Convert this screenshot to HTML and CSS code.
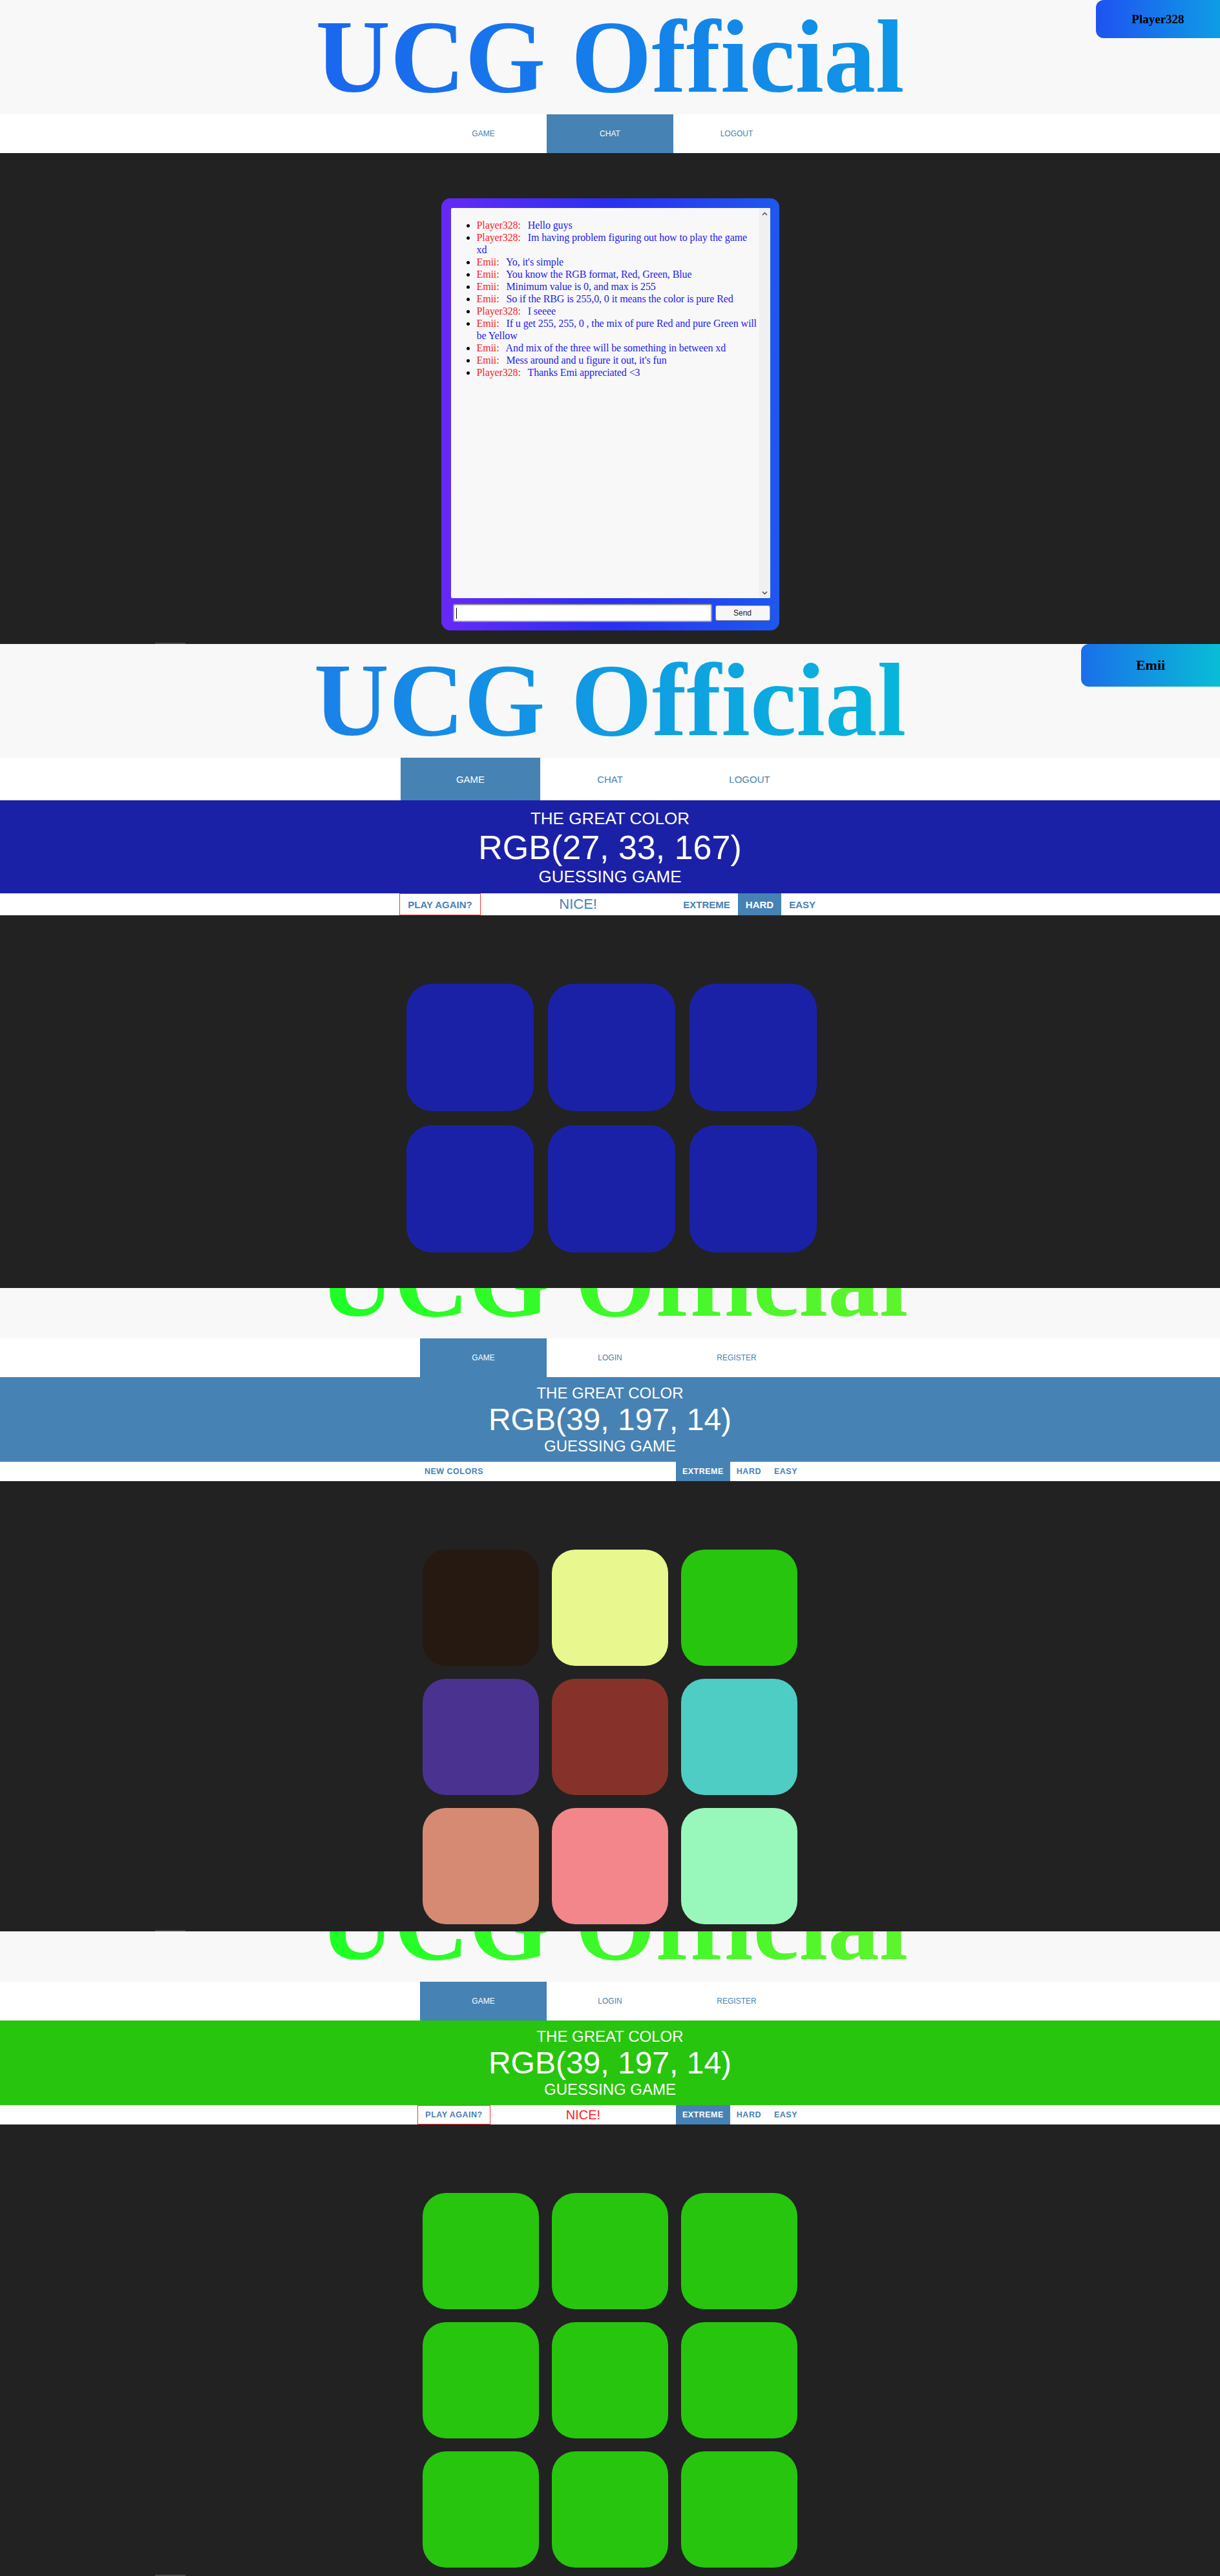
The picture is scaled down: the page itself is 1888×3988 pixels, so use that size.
FILE: index.html
```html
<!DOCTYPE html>
<html lang="en">
<head>
<meta charset="utf-8">
<title>UCG Official</title>
<link rel="stylesheet" href="styles.css">
</head>
<body>

<!-- Screen 1: chat -->
<section class="screen screen-chat">
  <header class="site-header hdr-a">
    <h1 class="title title-blue">UCG Official</h1>
    <div class="badge badge-a">Player328</div>
  </header>
  <nav class="nav">
    <a class="tab">GAME</a>
    <a class="tab active">CHAT</a>
    <a class="tab">LOGOUT</a>
  </nav>
  <main class="chat-area">
    <div class="chat-box">
      <div class="chat-log">
        <ul class="messages">
          <li><span class="name">Player328:</span> <span class="msg">Hello guys</span></li>
          <li><span class="name">Player328:</span> <span class="msg">Im having problem figuring out how to play the game xd</span></li>
          <li><span class="name">Emii:</span> <span class="msg">Yo, it's simple</span></li>
          <li><span class="name">Emii:</span> <span class="msg">You know the RGB format, Red, Green, Blue</span></li>
          <li><span class="name">Emii:</span> <span class="msg">Minimum value is 0, and max is 255</span></li>
          <li><span class="name">Emii:</span> <span class="msg">So if the RBG is 255,0, 0 it means the color is pure Red</span></li>
          <li><span class="name">Player328:</span> <span class="msg">I seeee</span></li>
          <li><span class="name">Emii:</span> <span class="msg">If u get 255, 255, 0 , the mix of pure Red and pure Green will be Yellow</span></li>
          <li><span class="name">Emii:</span> <span class="msg">And mix of the three will be something in between xd</span></li>
          <li><span class="name">Emii:</span> <span class="msg">Mess around and u figure it out, it's fun</span></li>
          <li><span class="name">Player328:</span> <span class="msg">Thanks Emi appreciated &lt;3</span></li>
        </ul>
        <div class="scrollbar">
          <svg class="arrow" width="9" height="6" viewBox="0 0 9 6"><polyline points="1,5 4.5,1.5 8,5" fill="none" stroke="#555" stroke-width="1.6"/></svg>
          <svg class="arrow" width="9" height="6" viewBox="0 0 9 6"><polyline points="1,1 4.5,4.5 8,1" fill="none" stroke="#555" stroke-width="1.6"/></svg>
        </div>
      </div>
      <div class="chat-form">
        <div class="input-box"><span class="caret"></span></div>
        <div class="send-btn">Send</div>
      </div>
    </div>
    <span class="mark"></span>
  </main>
</section>

<!-- Screen 2: game, hard, solved -->
<section class="screen">
  <header class="site-header hdr-b">
    <h1 class="title title-cyan">UCG Official</h1>
    <div class="badge badge-b">Emii</div>
  </header>
  <nav class="nav nav-b">
    <a class="tab active">GAME</a>
    <a class="tab">CHAT</a>
    <a class="tab">LOGOUT</a>
  </nav>
  <div class="game-head head-b" style="background: rgb(27, 33, 167);">
    <div class="line-sm">The Great Color</div>
    <div class="line-lg">RGB(27, 33, 167)</div>
    <div class="line-sm">Guessing Game</div>
  </div>
  <div class="stripe stripe-b">
    <div class="stripe-inner">
      <div class="btn reset outlined">Play Again?</div>
      <div class="message">NICE!</div>
      <div class="btn mode">Extreme</div>
      <div class="btn mode selected">Hard</div>
      <div class="btn mode">Easy</div>
    </div>
  </div>
  <div class="board board-b">
    <div class="grid grid-b">
      <div class="square" style="background: rgb(27, 33, 167);"></div>
      <div class="square" style="background: rgb(27, 33, 167);"></div>
      <div class="square" style="background: rgb(27, 33, 167);"></div>
      <div class="square" style="background: rgb(27, 33, 167);"></div>
      <div class="square" style="background: rgb(27, 33, 167);"></div>
      <div class="square" style="background: rgb(27, 33, 167);"></div>
    </div>
  </div>
</section>

<!-- Screen 3: game, extreme, new -->
<section class="screen">
  <header class="site-header hdr-c">
    <h1 class="title title-green">UCG Official</h1>
  </header>
  <nav class="nav">
    <a class="tab active">GAME</a>
    <a class="tab">LOGIN</a>
    <a class="tab">REGISTER</a>
  </nav>
  <div class="game-head head-c" style="background: #4682b4;">
    <div class="line-sm">The Great Color</div>
    <div class="line-lg">RGB(39, 197, 14)</div>
    <div class="line-sm">Guessing Game</div>
  </div>
  <div class="stripe stripe-c">
    <div class="stripe-inner">
      <div class="btn reset">New Colors</div>
      <div class="message"></div>
      <div class="btn mode selected">Extreme</div>
      <div class="btn mode">Hard</div>
      <div class="btn mode">Easy</div>
    </div>
  </div>
  <div class="board board-c">
    <div class="grid grid-c">
      <div class="square" style="background: rgb(38, 25, 17);"></div>
      <div class="square" style="background: rgb(232, 248, 142);"></div>
      <div class="square" style="background: rgb(39, 197, 14);"></div>
      <div class="square" style="background: rgb(74, 50, 144);"></div>
      <div class="square" style="background: rgb(134, 50, 42);"></div>
      <div class="square" style="background: rgb(78, 205, 196);"></div>
      <div class="square" style="background: rgb(214, 138, 116);"></div>
      <div class="square" style="background: rgb(242, 134, 139);"></div>
      <div class="square" style="background: rgb(152, 248, 188);"></div>
    </div>
    <span class="mark"></span>
  </div>
</section>

<!-- Screen 4: game, extreme, solved -->
<section class="screen">
  <header class="site-header hdr-c">
    <h1 class="title title-green">UCG Official</h1>
  </header>
  <nav class="nav">
    <a class="tab active">GAME</a>
    <a class="tab">LOGIN</a>
    <a class="tab">REGISTER</a>
  </nav>
  <div class="game-head head-c" style="background: rgb(39, 197, 14);">
    <div class="line-sm">The Great Color</div>
    <div class="line-lg">RGB(39, 197, 14)</div>
    <div class="line-sm">Guessing Game</div>
  </div>
  <div class="stripe stripe-c">
    <div class="stripe-inner">
      <div class="btn reset outlined">Play Again?</div>
      <div class="message message-red">NICE!</div>
      <div class="btn mode selected">Extreme</div>
      <div class="btn mode">Hard</div>
      <div class="btn mode">Easy</div>
    </div>
  </div>
  <div class="board board-d">
    <div class="grid grid-c">
      <div class="square" style="background: rgb(39, 197, 14);"></div>
      <div class="square" style="background: rgb(39, 197, 14);"></div>
      <div class="square" style="background: rgb(39, 197, 14);"></div>
      <div class="square" style="background: rgb(39, 197, 14);"></div>
      <div class="square" style="background: rgb(39, 197, 14);"></div>
      <div class="square" style="background: rgb(39, 197, 14);"></div>
      <div class="square" style="background: rgb(39, 197, 14);"></div>
      <div class="square" style="background: rgb(39, 197, 14);"></div>
      <div class="square" style="background: rgb(39, 197, 14);"></div>
    </div>
    <span class="mark"></span>
  </div>
</section>

</body>
</html>
```

FILE: styles.css
```css
* { box-sizing: border-box; }

body {
  margin: 0;
  background: #222222;
  font-family: "Liberation Sans", Arial, sans-serif;
}

.screen { position: relative; }

/* ---------- site header ---------- */
.site-header {
  position: relative;
  background: #f8f8f8;
  overflow: hidden;
  display: flex;
  justify-content: center;
  align-items: flex-start;
}
.hdr-a { height: 177px; }
.hdr-b { height: 176px; }
.hdr-c { height: 78px; padding-left: 12px; }

.title {
  margin: 8px 0 0;
  font-family: "Liberation Serif", "Times New Roman", serif;
  font-weight: bold;
  font-size: 160px;
  line-height: 160px;
  white-space: nowrap;
  color: transparent;
  -webkit-background-clip: text;
  background-clip: text;
}
.hdr-b .title { margin-top: 7px; font-size: 161px; }
.hdr-c .title { margin-top: -91px; }

.title-blue { background-image: linear-gradient(90deg, #1b66ef, #0f97e6); }
.title-cyan { background-image: linear-gradient(90deg, #1a80e9, #07b6dc); }
.title-green { background-image: linear-gradient(90deg, #1cff25, #5ef42c); }

.badge {
  position: absolute;
  top: 0;
  right: 0;
  display: flex;
  align-items: center;
  justify-content: center;
  border-radius: 12px 0 0 12px;
  font-family: "Liberation Serif", "Times New Roman", serif;
  font-weight: bold;
  color: #000;
}
.badge-a {
  width: 192px;
  height: 59px;
  font-size: 19px;
  background: linear-gradient(90deg, #1f52f1, #0e9de5);
}
.badge-b {
  width: 215px;
  height: 66px;
  font-size: 22px;
  background: linear-gradient(90deg, #1a6fea, #09bdd6);
}

/* ---------- nav ---------- */
.nav {
  display: flex;
  justify-content: center;
  height: 60px;
  background: #ffffff;
}
.tab {
  width: 196px;
  display: flex;
  align-items: center;
  justify-content: center;
  color: #4682b4;
  font-size: 12px;
}
.tab.active {
  background: #4682b4;
  color: #ffffff;
}
.nav-b { height: 66px; }
.nav-b .tab { width: 216px; font-size: 15px; }

/* ---------- chat ---------- */
.chat-area {
  position: relative;
  display: block;
  height: 760px;
  padding-top: 70px;
}
.chat-box {
  width: 523px;
  height: 669px;
  margin: 0 auto;
  padding: 15px 14px 13px 15px;
  border-radius: 14px;
  background: linear-gradient(90deg, #6629f7 0%, #2b2ff3 50%, #1e58ee 100%);
  display: flex;
  flex-direction: column;
}
.chat-log {
  height: 604px;
  display: flex;
  background: #f8f8f8;
  border-radius: 2px;
  overflow: hidden;
}
.messages {
  flex: 1;
  margin: 0;
  padding: 17px 0 0 40px;
  list-style: disc;
  font-family: "Liberation Serif", "Times New Roman", serif;
  font-size: 16px;
  line-height: 19px;
  letter-spacing: -0.1px;
  color: #000;
}
.name { color: #ff1a1a; margin-right: 7px; }
.msg { color: #2020f2; }

.scrollbar {
  width: 17px;
  background: #f0f0f0;
  display: flex;
  flex-direction: column;
  justify-content: space-between;
  align-items: center;
  padding: 6px 0 5px;
}
.arrow { display: block; }

.chat-form {
  display: flex;
  align-items: flex-start;
  gap: 5px;
  margin-top: 9px;
}
.input-box {
  width: 401px;
  height: 28px;
  margin-left: 3px;
  background: #ffffff;
  border: 2px solid #9a9a9a;
  border-radius: 3px;
  display: flex;
  align-items: center;
  padding-left: 3px;
}
.caret {
  width: 1px;
  height: 17px;
  background: #000;
}
.send-btn {
  width: 85px;
  height: 24px;
  margin-top: 2px;
  background: #f6f6f6;
  border: 1px solid #8e8e8e;
  border-radius: 3px;
  display: flex;
  align-items: center;
  justify-content: center;
  font-size: 12px;
  color: #1a1a1a;
}

.mark {
  position: absolute;
  left: 240px;
  bottom: 0;
  width: 47px;
  height: 2px;
  background: #4a4a4a;
}

/* ---------- game header ---------- */
.game-head {
  color: #ffffff;
  text-align: center;
  text-transform: uppercase;
  font-weight: normal;
}
.head-b { height: 144px; padding-top: 13px; }
.head-b .line-sm { font-size: 26px; line-height: 30px; }
.head-b .line-lg { font-size: 52px; line-height: 60px; }

.head-c { height: 131px; padding-top: 11px; }
.head-c .line-sm { font-size: 24px; line-height: 27px; }
.head-c .line-lg { font-size: 48px; line-height: 55px; }

/* ---------- stripe ---------- */
.stripe { background: #ffffff; }
.stripe-inner {
  display: flex;
  align-items: stretch;
  height: 100%;
  margin: 0 auto;
}
.btn {
  display: flex;
  align-items: center;
  justify-content: center;
  text-transform: uppercase;
  font-weight: bold;
  color: #4682b4;
  white-space: nowrap;
}
.btn.selected { background: #4682b4; color: #ffffff; }
.outlined { border: 1px solid #f03a3a; }
.message {
  flex: 1;
  display: flex;
  align-items: center;
  justify-content: center;
  color: #4682b4;
}
.message-red { color: #ff1a1a; }

.stripe-b { height: 34px; padding-left: 4px; }
.stripe-b .stripe-inner { width: 656px; }
.stripe-b .btn { font-size: 15px; }
.stripe-b .reset { width: 126px; }
.stripe-b .mode { padding: 0 12px; }
.stripe-b .message { font-size: 22px; }

.stripe-c { height: 30px; }
.stripe-c .stripe-inner { width: 600px; }
.stripe-c .btn { font-size: 12.5px; letter-spacing: 0.5px; }
.stripe-c .reset { width: 113px; margin-left: 2px; }
.stripe-c .mode { padding: 0 10px; }
.stripe-c .message { font-size: 20px; }

/* ---------- board ---------- */
.board { position: relative; padding-top: 106px; }
.board-b { height: 577px; padding-left: 4px; }
.board-c { height: 697px; }
.board-d { height: 699px; }

.grid {
  display: grid;
  margin: 0 auto;
}
.grid-b {
  width: 635px;
  grid-template-columns: repeat(3, 197px);
  grid-auto-rows: 197px;
  gap: 22px;
}
.grid-c {
  width: 580px;
  grid-template-columns: repeat(3, 180px);
  grid-auto-rows: 180px;
  gap: 20px;
}
.square { border-radius: 20%; }
```
